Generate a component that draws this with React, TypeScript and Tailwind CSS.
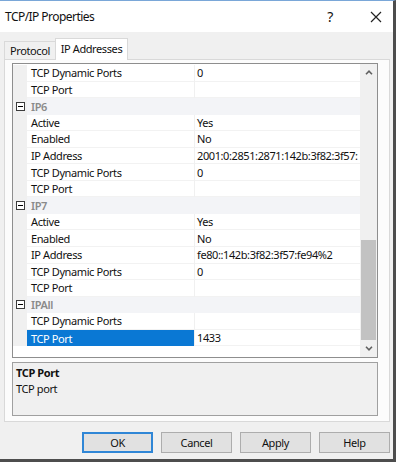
import React from "react";

type Row =
  | { kind: "cat"; label: string }
  | { kind: "prop"; name: string; value: string; selected?: boolean };

const rows: Row[] = [
  { kind: "prop", name: "TCP Dynamic Ports", value: "0" },
  { kind: "prop", name: "TCP Port", value: "" },
  { kind: "cat", label: "IP6" },
  { kind: "prop", name: "Active", value: "Yes" },
  { kind: "prop", name: "Enabled", value: "No" },
  { kind: "prop", name: "IP Address", value: "2001:0:2851:2871:142b:3f82:3f57:" },
  { kind: "prop", name: "TCP Dynamic Ports", value: "0" },
  { kind: "prop", name: "TCP Port", value: "" },
  { kind: "cat", label: "IP7" },
  { kind: "prop", name: "Active", value: "Yes" },
  { kind: "prop", name: "Enabled", value: "No" },
  { kind: "prop", name: "IP Address", value: "fe80::142b:3f82:3f57:fe94%2" },
  { kind: "prop", name: "TCP Dynamic Ports", value: "0" },
  { kind: "prop", name: "TCP Port", value: "" },
  { kind: "cat", label: "IPAll" },
  { kind: "prop", name: "TCP Dynamic Ports", value: "" },
  { kind: "prop", name: "TCP Port", value: "1433", selected: true },
];

function MinusBox() {
  return (
    <svg width="9" height="9" viewBox="0 0 9 9" className="block">
      <rect x="0.5" y="0.5" width="8" height="8" fill="#fff" stroke="#3c3c3c" />
      <line x1="2" y1="4.5" x2="7" y2="4.5" stroke="#000" />
    </svg>
  );
}

function Chevron({ up }: { up?: boolean }) {
  return (
    <svg width="8" height="5" viewBox="0 0 8 5" className="block">
      <path
        d={up ? "M1 4.2 L4 1.2 L7 4.2" : "M1 0.8 L4 3.8 L7 0.8"}
        fill="none"
        stroke="#606060"
        strokeWidth="1.6"
      />
    </svg>
  );
}

function GridRow({ row }: { row: Row }) {
  if (row.kind === "cat") {
    return (
      <div className="flex h-[16.55px] bg-[#f3f4f7]">
        <div className="w-[14px] shrink-0 bg-[#f0f0f0] flex items-center justify-center">
          <MinusBox />
        </div>
        <div className="flex-1 flex items-center pl-[4px] font-semibold text-[#8a8a8a]">
          {row.label}
        </div>
      </div>
    );
  }
  return (
    <div className="flex h-[16.55px]">
      <div className="w-[14px] shrink-0 bg-[#f0f0f0]" />
      <div
        className={
          row.selected
            ? "w-[167px] shrink-0 flex items-center pl-[4px] bg-[#0a78d4] text-white"
            : "w-[167px] shrink-0 flex items-center pl-[4px] border-b border-[#f2f2f2]"
        }
      >
        {row.name}
      </div>
      <div className="w-px shrink-0 bg-[#f0f0f0]" />
      <div className="flex-1 flex items-center pl-[2px] border-b border-[#f2f2f2] overflow-hidden whitespace-nowrap">
        {row.value}
      </div>
    </div>
  );
}

function Button({ label, primary }: { label: string; primary?: boolean }) {
  return (
    <div
      className={
        primary
          ? "w-[71px] h-[21px] flex items-center justify-center bg-[#e1e1e1] border-2 border-[#2f86d6]"
          : "w-[71px] h-[21px] flex items-center justify-center bg-[#e1e1e1] border border-[#adadad]"
      }
    >
      {label}
    </div>
  );
}

export default function App() {
  return (
    <div
      className="w-[399px] h-[464px] bg-white text-[11px] tracking-[-0.4px] text-[#111] leading-none"
      style={{ fontFamily: '"Noto Sans", "Open Sans", sans-serif' }}
    >
      <div className="w-[396px] h-[462px] flex flex-col bg-[#f0f0f0] border-t border-[#7aa7d8] border-r-[3px] border-b-[3px] border-r-[#4d4d4d] border-b-[#4d4d4d]">
        {/* title bar */}
        <div className="h-[31px] shrink-0 bg-white flex items-center pl-[5px]">
          <span className="text-[12px] tracking-[-0.55px]">TCP/IP Properties</span>
          <span className="ml-auto mr-[37px] text-[14px]">?</span>
          <svg width="12" height="12" viewBox="0 0 12 12" className="mr-[11px]">
            <path d="M1 1 L11 11 M11 1 L1 11" stroke="#222" strokeWidth="1.2" />
          </svg>
        </div>

        {/* tabs */}
        <div className="flex items-end h-[27px] pl-[4px] shrink-0">
          <div className="h-[18px] w-[52px] flex items-center justify-center border border-b-0 border-[#d9d9d9] bg-[#f0f0f0]">
            Protocol
          </div>
          <div className="h-[22px] w-[73px] -ml-px flex items-start pt-[4px] justify-center border border-b-0 border-[#d9d9d9] bg-white relative top-px">
            IP Addresses
          </div>
        </div>

        {/* panel */}
        <div className="ml-[4px] w-[386px] h-[363px] shrink-0 bg-[#fcfcfc] border border-[#d9d9d9] pt-[3px] pl-[7px]">
          {/* property grid */}
          <div className="w-[366px] h-[295px] border border-[#8e8e8e] bg-white flex">
            <div className="flex-1 flex flex-col pt-[1px]">
              {rows.map((r, i) => (
                <GridRow key={i} row={r} />
              ))}
            </div>
            <div className="w-[17px] shrink-0 bg-[#f0f0f0] flex flex-col">
              <div className="h-[17px] flex items-center justify-center">
                <Chevron up />
              </div>
              <div className="flex-1 flex flex-col justify-end">
                <div className="h-[100px] mx-px bg-[#c2c2c2]" />
              </div>
              <div className="h-[17px] flex items-center justify-center">
                <Chevron />
              </div>
            </div>
          </div>

          {/* description */}
          <div className="mt-[4px] w-[366px] h-[54px] border border-[#a0a0a0] bg-[#f0f0f0] pl-[3px] pt-[4px]">
            <div className="font-bold">TCP Port</div>
            <div className="mt-[5px]">TCP port</div>
          </div>
        </div>

        {/* buttons */}
        <div className="flex pl-[82px] gap-[8px] mt-[10px]">
          <Button label="OK" primary />
          <Button label="Cancel" />
          <Button label="Apply" />
          <Button label="Help" />
        </div>
      </div>
    </div>
  );
}
